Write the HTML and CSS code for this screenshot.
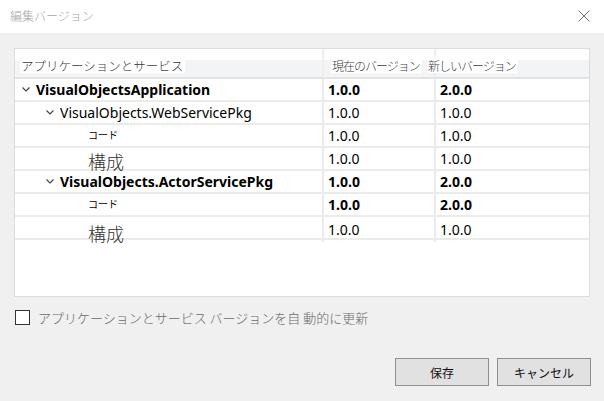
FILE: index.html
```html
<!DOCTYPE html>
<html lang="ja">
<head>
<meta charset="utf-8">
<title>編集バージョン</title>
<link rel="stylesheet" href="styles.css">
</head>
<body>
<div class="titlebar">
  <span class="title">編集バージョン</span>
  <svg class="close" width="12" height="12" viewBox="0 0 12 12"><path d="M0.5 0.5 L11.5 11.5 M11.5 0.5 L0.5 11.5" stroke="#707070" stroke-width="1" fill="none"/></svg>
</div>
<div class="main">
  <div class="grid">
    <div class="row header">
      <div class="cell c1"><span class="hlabel wide">アプリケーションとサービス</span></div>
      <div class="cell c2"><span class="hlabel">現在のバージョン</span></div>
      <div class="cell c3"><span class="hlabel shift">新しいバージョン</span></div>
    </div>
    <div class="row bold">
      <div class="cell c1 l0"><svg class="chev" width="8" height="5" viewBox="0 0 8 5"><path d="M0.5 0.5 L4 4 L7.5 0.5" stroke="#444" stroke-width="1.2" fill="none"/></svg><span>VisualObjectsApplication</span></div>
      <div class="cell c2">1.0.0</div>
      <div class="cell c3">2.0.0</div>
    </div>
    <div class="row">
      <div class="cell c1 l1"><svg class="chev" width="8" height="5" viewBox="0 0 8 5"><path d="M0.5 0.5 L4 4 L7.5 0.5" stroke="#444" stroke-width="1.2" fill="none"/></svg><span>VisualObjects.WebServicePkg</span></div>
      <div class="cell c2">1.0.0</div>
      <div class="cell c3">1.0.0</div>
    </div>
    <div class="row">
      <div class="cell c1 l2"><span class="small">コード</span></div>
      <div class="cell c2">1.0.0</div>
      <div class="cell c3">1.0.0</div>
    </div>
    <div class="row">
      <div class="cell c1 l2"><span class="big">構成</span></div>
      <div class="cell c2">1.0.0</div>
      <div class="cell c3">1.0.0</div>
    </div>
    <div class="row bold">
      <div class="cell c1 l1"><svg class="chev" width="8" height="5" viewBox="0 0 8 5"><path d="M0.5 0.5 L4 4 L7.5 0.5" stroke="#444" stroke-width="1.2" fill="none"/></svg><span>VisualObjects.ActorServicePkg</span></div>
      <div class="cell c2">1.0.0</div>
      <div class="cell c3">2.0.0</div>
    </div>
    <div class="row bold">
      <div class="cell c1 l2"><span class="small">コード</span></div>
      <div class="cell c2">1.0.0</div>
      <div class="cell c3">2.0.0</div>
    </div>
    <div class="row">
      <div class="cell c1 l2"><span class="big low">構成</span></div>
      <div class="cell c2">1.0.0</div>
      <div class="cell c3">1.0.0</div>
    </div>
  </div>
  <label class="check">
    <span class="box"></span>
    <span class="checktext">アプリケーションとサービス バージョンを自 動的に更新</span>
  </label>
  <div class="buttons">
    <button class="btn">保存</button>
    <button class="btn">キャンセル</button>
  </div>
</div>
</body>
</html>
```
FILE: styles.css
```css
* { box-sizing: border-box; }
html, body { margin: 0; padding: 0; }
body {
  width: 604px;
  height: 401px;
  background: #f0f0f0;
  font-family: "Noto Sans", "Noto Sans CJK JP", sans-serif;
  overflow: hidden;
}
.titlebar {
  height: 33px;
  background: #ffffff;
  display: flex;
  align-items: center;
  justify-content: space-between;
  padding: 0 14px 2px 10px;
}
.title {
  font-family: "Noto Sans CJK JP", sans-serif;
  font-size: 12px;
  color: #a6a6a6;
  font-weight: 300;
}
.close { display: block; }
.main {
  padding: 15px 13px 0 14px;
}
.grid {
  width: 576px;
  height: 249px;
  border: 1px solid #dcdcdc;
  background: #ffffff;
}
.row {
  display: grid;
  grid-template-columns: 309px 112px 1fr;
  height: 23px;
  border-bottom: 2px solid #ebebeb;
  font-size: 14px;
  color: #000;
}
.row.header {
  height: 30px;
  border-bottom: 2px solid #e3e3e3;
  background: linear-gradient(#ffffff 0, #ffffff 11px, #f3f4f6 11px, #f3f4f6 100%);
}
.cell {
  display: flex;
  align-items: center;
  border-right: 2px solid #ebebeb;
  padding-left: 4px;
  white-space: nowrap;
  line-height: 1;
}
.cell.c3 { border-right: none; padding-left: 4px; }
.header .cell { align-items: flex-end; padding-bottom: 4px; border-right-color: #eeeeee; }
.header .c1 { padding-left: 5px; }
.header .c2 { padding-left: 7px; }
.hlabel {
  font-family: "Noto Sans CJK JP", sans-serif;
  font-weight: 300;
  font-size: 12px;
  letter-spacing: -1px;
  color: #3a3a3a;
  background: #ffffff;
  padding: 2px 2px 1px 1px;
  line-height: 13px;
}
.hlabel.wide { font-size: 12.5px; letter-spacing: 0; }
.hlabel.shift { margin-left: -13px; }
.bold { font-weight: 700; }
.chev { flex: none; margin-right: 6px; }
.l0 { padding-left: 7px; }
.l1 { padding-left: 31px; }
.l2 { padding-left: 73px; }
.small {
  font-family: "Noto Sans CJK JP", sans-serif;
  font-size: 10px;
  font-weight: 400;
  margin-top: -2px;
}
.big {
  font-family: "Noto Sans CJK JP", sans-serif;
  font-size: 18px;
  font-weight: 300;
  color: #333;
  margin-top: 4px;
}
.big.low { margin-top: 7px; }
.check {
  display: flex;
  align-items: center;
  margin-top: 13px;
  height: 15px;
  padding-left: 1px;
}
.box {
  width: 15px;
  height: 15px;
  border: 1px solid #333;
  background: #fff;
  flex: none;
}
.checktext {
  margin-left: 8px;
  font-family: "Noto Sans CJK JP", sans-serif;
  font-weight: 300;
  font-size: 13px;
  color: #6a6a6a;
  white-space: nowrap;
}
.buttons {
  display: flex;
  justify-content: flex-end;
  gap: 8px;
  margin-top: 33px;
}
.btn {
  width: 94px;
  height: 28px;
  background: #e1e1e1;
  border: 1px solid #8f8f8f;
  font-family: "Noto Sans CJK JP", sans-serif;
  font-size: 12px;
  color: #111;
  padding: 0;
}
```
